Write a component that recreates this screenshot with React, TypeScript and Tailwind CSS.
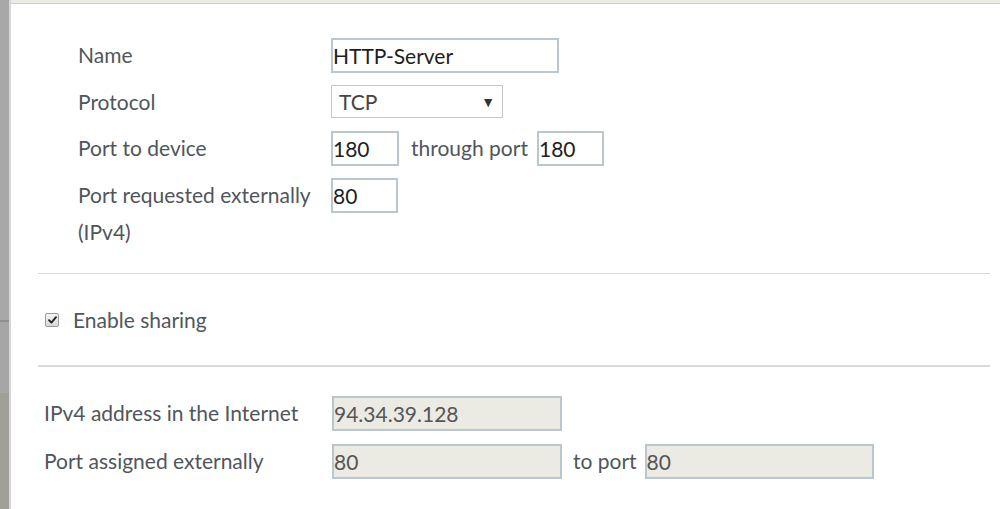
import React from "react";

const font = { fontFamily: "Lato, 'Open Sans', sans-serif" };

function Label({ children, w }: { children: React.ReactNode; w: string }) {
  return <div className={`${w} shrink-0 text-[21px] leading-[37px] text-[#50565c]`}>{children}</div>;
}

function TextBox({ value, w, disabled }: { value: string; w: string; disabled?: boolean }) {
  return (
    <div
      className={`${w} h-[35px] mt-[2px] flex items-center border-2 border-[#bac7cf] pl-0 text-[21px] ${
        disabled ? "bg-[#ebebe4] text-[#555]" : "bg-white text-[#1e1e1e]"
      }`}
    >
      {value}
    </div>
  );
}

function Checkbox() {
  return (
    <div className="w-[14px] h-[14px] rounded-[2px] border border-[#9a9a9a] bg-gradient-to-b from-[#f4f4f4] to-[#d9d9d9] flex items-center justify-center">
      <svg width="9" height="8" viewBox="0 0 9 8">
        <path d="M1 4.2 L3.4 6.6 L8 1.2" fill="none" stroke="#222" strokeWidth="1.9" strokeLinecap="round" strokeLinejoin="round" />
      </svg>
    </div>
  );
}

export default function App() {
  return (
    <div className="w-[1000px] h-[509px] bg-white flex overflow-hidden" style={font}>
      <div className="w-[11px] shrink-0 flex">
        <div className="w-[9px] flex flex-col">
          <div className="h-[320px] bg-[#a8a8a8]" />
          <div className="h-[2px] bg-[#8f8f8f]" />
          <div className="h-[71px] bg-[#a6a6a6]" />
          <div className="flex-1 bg-[#a09f98]" />
        </div>
        <div className="w-[2px] bg-[#d6d6d6]" />
      </div>

      <div className="flex-1 flex flex-col">
        <div className="h-[4px] bg-[#ecece7] border-b border-[#cfcfca]" />

        <div className="pl-[67px] pt-[32px] flex flex-col">
          <div className="flex items-start">
            <Label w="w-[253px]">Name</Label>
            <TextBox value="HTTP-Server" w="w-[228px]" />
          </div>

          <div className="flex items-start mt-[10px]">
            <Label w="w-[253px]">Protocol</Label>
            <div className="w-[172px] h-[33px] mt-[2px] border border-[#c6c6c6] flex items-center justify-between pl-[7px] pr-[7px] text-[21px] text-[#444]">
              <span>TCP</span>
              <span className="text-[14px] text-[#333]">▼</span>
            </div>
          </div>

          <div className="flex items-start mt-[9px]">
            <Label w="w-[253px]">Port to device</Label>
            <TextBox value="180" w="w-[68px]" />
            <span className="ml-[12px] mr-[9px] text-[21px] leading-[37px] text-[#50565c]">through port</span>
            <TextBox value="180" w="w-[67px]" />
          </div>

          <div className="flex items-start mt-[10px]">
            <Label w="w-[253px]">
              Port requested externally
              <br />
              (IPv4)
            </Label>
            <TextBox value="80" w="w-[67px]" />
          </div>
        </div>

        <div className="ml-[27px] mr-[10px] mt-[23px] h-px bg-[#d9d9d9]" />

        <div className="h-[91px] pl-[34px] flex items-center gap-[14px]">
          <Checkbox />
          <span className="text-[21px] text-[#50565c]">Enable sharing</span>
        </div>

        <div className="ml-[27px] mr-[10px] h-[2px] bg-[#dadada]" />

        <div className="pl-[33px] pt-[27px] flex flex-col">
          <div className="flex items-start">
            <Label w="w-[288px]">IPv4 address in the Internet</Label>
            <TextBox value="94.34.39.128" w="w-[230px]" disabled />
          </div>
          <div className="flex items-start mt-[11px]">
            <Label w="w-[288px]">Port assigned externally</Label>
            <TextBox value="80" w="w-[230px]" disabled />
            <span className="ml-[11px] mr-[8px] text-[21px] leading-[37px] text-[#50565c]">to port</span>
            <TextBox value="80" w="w-[229px]" disabled />
          </div>
        </div>
      </div>
    </div>
  );
}
